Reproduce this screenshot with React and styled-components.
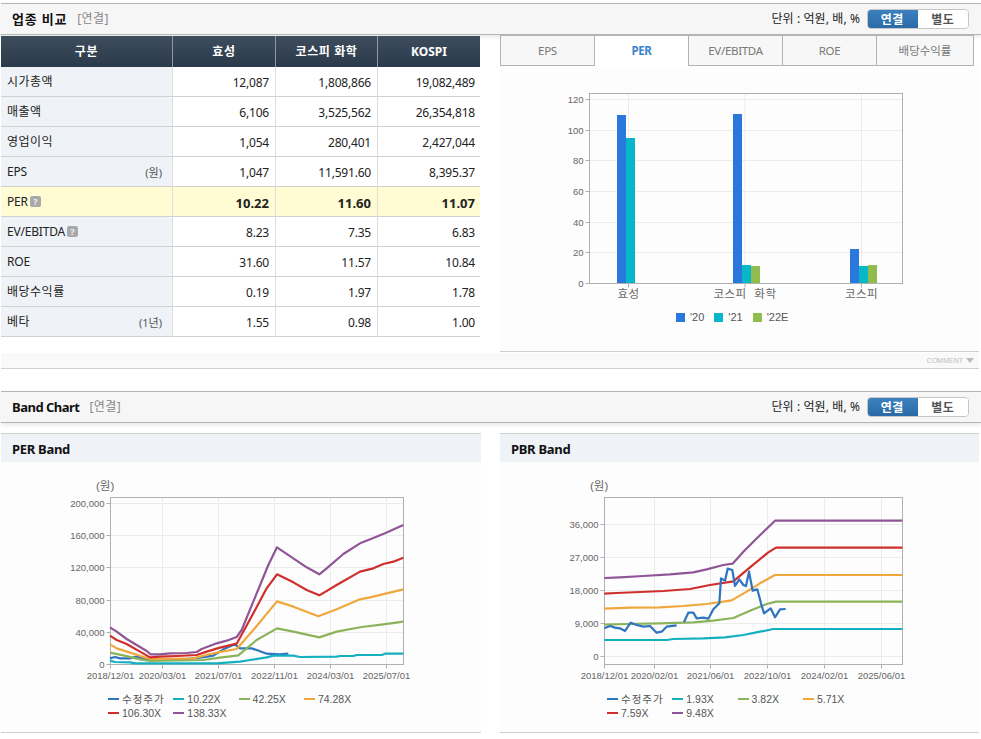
import React from 'react';
import styled, { createGlobalStyle } from 'styled-components';

const GlobalStyle = createGlobalStyle`
  html, body {
    margin: 0;
    background: #fff;
  }
  * {
    box-sizing: border-box;
  }
`;

const FONT = `"Noto Sans", "Noto Sans CJK KR", sans-serif`;
const CHART_FONT = `"Liberation Sans", "Noto Sans CJK KR", sans-serif`;

const isKo = (text) => /[가-힣]/.test(text);

const Page = styled.div`
  width: 981px;
  height: 739px;
  padding: 3px 0 0 1px;
  overflow: hidden;
  font-family: ${FONT};
  font-size: 12px;
  line-height: 14px;
  color: #222;
`;

const SectionBar = styled.div`
  display: flex;
  align-items: center;
  height: 32px;
  margin-top: ${(p) => p.$top || 0}px;
  padding: 0 12px 0 11px;
  background: #f6f6f6;
  border-top: 1px solid #b5b5b5;
  border-bottom: 1px solid #b5b5b5;
  box-shadow: 0 2px 4px rgba(0, 0, 0, 0.1);
`;

const SectionTitle = styled.h2`
  margin: 0;
  font-size: 13px;
  font-weight: 700;
  letter-spacing: ${(p) => (p.$ko ? '0.8px' : '-0.5px')};
  color: #111;
`;

const Scope = styled.span`
  margin-left: 10px;
  font-size: 12px;
  letter-spacing: 0.4px;
  color: #888;
`;

const Unit = styled.span`
  margin-left: auto;
  margin-right: 7px;
  font-size: 12px;
  letter-spacing: 0.1px;
`;

const Toggle = styled.div`
  display: flex;
  width: 102px;
  height: 20px;
  border-radius: 4px;
  overflow: hidden;
  border: 1px solid #c6c6c6;
`;

const ToggleButton = styled.button`
  flex: 1;
  margin: ${(p) => (p.$active ? '-1px 0 -1px -1px' : 0)};
  padding: 0;
  border: 0;
  font-family: inherit;
  font-size: 12px;
  font-weight: 700;
  letter-spacing: 0.5px;
  color: ${(p) => (p.$active ? '#fff' : '#555')};
  background: ${(p) => (p.$active ? 'linear-gradient(#3d82c0, #2a68a6)' : '#fff')};
`;

const Columns = styled.div`
  display: grid;
  grid-template-columns: 480px 479px;
  column-gap: 19px;
  margin-top: ${(p) => p.$top || 0}px;
`;

const CompareTable = styled.table`
  width: 479px;
  height: 301px;
  margin-top: 1px;
  table-layout: fixed;
  border-collapse: separate;
  border-spacing: 0;
`;

const HeadCell = styled.th`
  width: ${(p) => p.$width}px;
  height: 31px;
  padding: 0;
  font-size: 12px;
  font-weight: 700;
  letter-spacing: ${(p) => (p.$ko ? '0.6px' : 0)};
  color: #fff;
  background: linear-gradient(#3e4d5d, #2b3a4a);
  border-right: 1px solid #8d99a6;
  &:last-child {
    border-right: 0;
  }
`;

const LabelCell = styled.td`
  height: 30px;
  padding: 0 10px 0 6px;
  background: ${(p) => (p.$hot ? '#fffbd2' : '#eff2f7')};
  border-right: 1px solid #dedede;
  border-bottom: 1px solid #d0d0d0;
`;

const LabelInner = styled.div`
  display: flex;
  align-items: center;
  justify-content: space-between;
`;

const LabelText = styled.span`
  display: flex;
  align-items: center;
  gap: 2px;
  letter-spacing: ${(p) => (p.$ko ? '0.5px' : '-0.2px')};
`;

const Note = styled.span`
  margin-top: 3px;
  font-size: 11px;
  color: #555;
`;

const HelpBadge = styled.span`
  display: inline-block;
  width: 11px;
  height: 11px;
  border-radius: 2px;
  background: #a9a9a9;
  color: #eee;
  font-size: 9px;
  font-weight: 700;
  line-height: 11px;
  text-align: center;
  letter-spacing: 0;
`;

const ValueCell = styled.td`
  height: 30px;
  padding: 2px 6px 0 0;
  text-align: right;
  font-weight: ${(p) => (p.$hot ? 700 : 400)};
  font-size: ${(p) => (p.$hot ? '13px' : '12px')};
  letter-spacing: ${(p) => (p.$hot ? 0 : '-0.2px')};
  color: #222;
  background: ${(p) => (p.$hot ? '#fffbd2' : '#fff')};
  border-right: 1px solid #dedede;
  border-bottom: 1px solid #d0d0d0;
  &:last-child {
    padding-right: 5px;
    border-right: 0;
  }
`;

const Tabs = styled.div`
  display: flex;
  width: 474px;
  height: 31px;
`;

const Tab = styled.div`
  flex: 0 0 95px;
  display: flex;
  align-items: center;
  justify-content: center;
  margin-left: -1px;
  font-size: 11.5px;
  font-weight: ${(p) => (p.$active ? 700 : 400)};
  letter-spacing: ${(p) => (p.$ko ? 0 : '-0.3px')};
  color: ${(p) => (p.$active ? '#3a85cc' : '#777')};
  background: ${(p) => (p.$active ? '#fff' : '#f7f7f7')};
  border: 1px solid #b2b2b2;
  border-bottom: ${(p) => (p.$active ? '0' : '1px solid #b2b2b2')};
  &:first-child {
    margin-left: 0;
  }
  &:last-child {
    flex: 1;
  }
`;

const BarPanel = styled.div`
  height: 286px;
  background: #fdfdfd;
  border-bottom: 1px solid #cfcfcf;
`;

const ChartSvg = styled.svg`
  display: block;
  font-family: ${CHART_FONT};
  font-size: 9.5px;
  fill: #666;
`;

const CommentStrip = styled.div`
  display: flex;
  align-items: center;
  justify-content: flex-end;
  gap: 3px;
  width: 978px;
  height: 16px;
  margin-top: 1px;
  padding-right: 5px;
  background: #f9f9f9;
  border-bottom: 1px solid #cfcfcf;
  font-family: ${CHART_FONT};
  font-size: 7px;
  color: #bbb;
`;

const CommentArrow = styled.i`
  width: 0;
  height: 0;
  border-left: 4px solid transparent;
  border-right: 4px solid transparent;
  border-top: 5px solid #bbb;
`;

const BandPanel = styled.section`
  height: 300px;
  background: #fdfdfd;
  border-top: 1px solid #cfcfcf;
  border-bottom: 1px solid #cfcfcf;
`;

const BandTitle = styled.h3`
  display: flex;
  align-items: center;
  height: 28px;
  margin: 0;
  padding: 2px 0 0 11px;
  font-size: 13px;
  font-weight: 700;
  letter-spacing: -0.3px;
  color: #111;
  background: #eff2f7;
`;

const SquareLegend = styled.div`
  display: flex;
  gap: 10px;
  margin-top: 4px;
  padding-left: 176px;
  font-family: ${CHART_FONT};
  font-size: 11px;
  color: #555;
`;

const SquareItem = styled.span`
  display: flex;
  align-items: center;
  gap: 5px;
`;

const Square = styled.i`
  width: 9px;
  height: 9px;
  background: ${(p) => p.$color};
`;

const LineLegend = styled.div`
  display: grid;
  grid-template-columns: repeat(4, 65.3px);
  grid-auto-rows: 14px;
  padding-left: ${(p) => p.$left}px;
  font-family: ${CHART_FONT};
  font-size: 10.5px;
  color: #555;
`;

const LineItem = styled.span`
  display: flex;
  align-items: center;
  gap: 3px;
  letter-spacing: ${(p) => (p.$ko ? '1px' : 0)};
  white-space: nowrap;
`;

const Swatch = styled.i`
  flex: none;
  width: 11px;
  height: 2.5px;
  background: ${(p) => p.$color};
`;

const COLORS = {
  blue: '#2f74c0',
  teal: '#14b0c0',
  green: '#8bb35a',
  orange: '#f0a83c',
  red: '#cf2f2c',
  purple: '#8f5596',
};

const ROWS = [
  { label: '시가총액', values: ['12,087', '1,808,866', '19,082,489'] },
  { label: '매출액', values: ['6,106', '3,525,562', '26,354,818'] },
  { label: '영업이익', values: ['1,054', '280,401', '2,427,044'] },
  { label: 'EPS', note: '(원)', values: ['1,047', '11,591.60', '8,395.37'] },
  { label: 'PER', help: true, hot: true, values: ['10.22', '11.60', '11.07'] },
  { label: 'EV/EBITDA', help: true, values: ['8.23', '7.35', '6.83'] },
  { label: 'ROE', values: ['31.60', '11.57', '10.84'] },
  { label: '배당수익률', values: ['0.19', '1.97', '1.78'] },
  { label: '베타', note: '(1년)', values: ['1.55', '0.98', '1.00'] },
];

const TABS = ['EPS', 'PER', 'EV/EBITDA', 'ROE', '배당수익률'];

const HEADS = [['구분', 172], ['효성', 103], ['코스피 화학', 102], ['KOSPI', 102]];

// zoomed-crop coordinates (3x), converted to page coordinates when drawn
const PER_LINES = [
  ['blue', [[150,505],[165,501],[180,505],[210,505],[230,500],[260,507],[300,510],[340,510],[380,507],[420,503],[460,497],[490,478],[525,463],[540,475],[575,475],[590,480],[620,491],[660,493],[685,491]]],
  ['teal', [[150,512],[165,516],[210,517],[225,520],[470,520],[540,515],[570,510],[620,502],[640,497],[700,497],[720,501],[830,500],[840,498],[880,498],[890,495],[965,495],[975,491],[1030,491]]],
  ['green', [[150,488],[190,496],[240,508],[270,513],[430,510],[480,503],[535,496],[590,450],[651,415],[700,425],[778,442],[830,425],[905,411],[970,403],[1030,395]]],
  ['orange', [[150,463],[170,475],[210,488],[270,507],[300,507],[400,505],[450,492],[490,484],[530,477],[580,420],[651,334],[700,350],[775,379],[830,358],[900,328],[930,322],[980,310],[1030,298]]],
  ['red', [[150,437],[170,450],[200,462],[240,485],[270,502],[300,500],[350,498],[410,495],[440,485],[480,473],[530,461],[580,370],[620,295],[651,253],[700,277],[740,300],[778,316],[830,285],[900,245],[940,235],[970,222],[1000,215],[1030,203]]],
  ['purple', [[150,412],[170,425],[200,447],[230,465],[260,483],[272,493],[300,493],[330,490],[380,489],[410,486],[425,477],[470,460],[500,452],[530,441],[545,420],[590,310],[625,225],[651,172],[700,205],[740,232],[778,253],[800,235],[850,192],[900,160],[925,150],[975,130],[1030,105]]],
];

const PBR_LINES = [
  ['teal', [[133,450],[320,450],[340,447],[430,445],[495,442],[550,435],[600,425],[640,417],[1027,417]]],
  ['green', [[133,404],[200,402],[300,400],[400,397],[460,392],[520,384],[570,362],[620,342],[648,335],[1027,335]]],
  ['orange', [[133,356],[210,353],[300,352],[370,348],[440,342],[515,331],[560,305],[600,280],[645,255],[1027,255]]],
  ['red', [[133,311],[170,309],[240,306],[310,303],[390,297],[450,285],[520,274],[570,232],[625,187],[648,173],[1027,173]]],
  ['purple', [[133,264],[180,262],[250,258],[330,253],[400,247],[440,238],[490,225],[518,221],[550,185],[580,155],[645,92],[1027,92]]],
  ['blue', [[133,415],[150,408],[165,413],[180,415],[195,423],[212,398],[230,405],[250,410],[270,408],[290,428],[305,425],[320,410],[350,406]]],
  ['blue', [[372,396],[385,368],[400,368],[410,385],[430,383],[445,386],[460,358],[478,340],[483,265],[495,272],[503,236],[517,240],[525,288],[538,268],[550,285],[558,288],[567,245],[578,302],[592,298],[603,340],[612,370],[632,355],[645,382],[660,358],[677,357]]],
];

const toPoints = (pts, ox, oy) => pts.map(([x, y]) => `${ox + x / 3},${oy + y / 3}`).join(' ');

function BarChart() {
  const left = 589.5;
  const right = 902.5;
  const top = 93.5;
  const bottom = 283.5;
  const ticks = [['120', 99.5], ['100', 130.5], ['80', 160.5], ['60', 191.5], ['40', 222.5], ['20', 252.5], ['0', 283.5]];
  const cats = [['효성', 628.5], ['코스피 화학', 745], ['코스피', 861.5]];
  const bars = [
    [617, 115, '#2b78dc'], [626, 138, '#06b6c9'],
    [733, 114, '#2b78dc'], [742, 265, '#06b6c9'], [751, 266, '#8fbc4c'],
    [850, 249, '#2b78dc'], [859, 266, '#06b6c9'], [868, 265, '#8fbc4c'],
  ];
  return (
    <ChartSvg width="479" height="240" viewBox="500 66 479 240">
      {ticks.map(([label, y]) => (
        <g key={label}>
          <line x1={left} x2={right} y1={y} y2={y} stroke="#ececec" />
          <line x1={left - 4} x2={left} y1={y} y2={y} stroke="#b0b0b0" />
          <text x={left - 6} y={y + 3.5} textAnchor="end">{label}</text>
        </g>
      ))}
      {cats.map(([label, x]) => (
        <line key={label} x1={x} x2={x} y1={top} y2={bottom} stroke="#ececec" />
      ))}
      {bars.map(([x, y, color]) => (
        <rect key={x} x={x} y={y} width="9" height={283 - y} fill={color} />
      ))}
      <rect x={left} y={top} width={right - left} height={bottom - top} fill="none" stroke="#b0b0b0" />
      {cats.map(([label, x]) => (
        <g key={label}>
          <line x1={x} x2={x} y1={bottom} y2={bottom + 4} stroke="#b0b0b0" />
          <text x={x} y={298} textAnchor="middle" fontSize="11.5" letterSpacing="0.5" wordSpacing="4">{label}</text>
        </g>
      ))}
    </ChartSvg>
  );
}

function BandChart({ box, plot, oy, ox, yTicks, xTicks, lines, unitX }) {
  const [left, right, top, bottom] = plot;
  return (
    <ChartSvg width={box[2]} height={box[3]} viewBox={box.join(' ')}>
      <text x={unitX} y={490} fontSize="11.5">(원)</text>
      {yTicks.map(([label, y]) => (
        <g key={label}>
          <line x1={left} x2={right} y1={y} y2={y} stroke="#ececec" />
          <line x1={left - 4} x2={left} y1={y} y2={y} stroke="#b0b0b0" />
          <text x={left - 6} y={y + 3.5} textAnchor="end">{label}</text>
        </g>
      ))}
      {xTicks.map(([label, x]) => (
        <line key={label} x1={x} x2={x} y1={top} y2={bottom} stroke="#ececec" />
      ))}
      <rect x={left} y={top} width={right - left} height={bottom - top} fill="none" stroke="#b0b0b0" />
      {lines.map(([name, pts], i) => (
        <polyline
          key={i}
          points={toPoints(pts, ox, oy)}
          fill="none"
          stroke={COLORS[name]}
          strokeWidth="2.2"
          strokeLinejoin="round"
        />
      ))}
      {xTicks.map(([label, x]) => (
        <g key={label}>
          <line x1={x} x2={x} y1={bottom} y2={bottom + 4} stroke="#b0b0b0" />
          <text x={x} y={679} textAnchor="middle">{label}</text>
        </g>
      ))}
    </ChartSvg>
  );
}

function Legend({ left, items }) {
  return (
    <LineLegend $left={left}>
      {items.map(([name, label]) => (
        <LineItem key={label} $ko={isKo(label)}>
          <Swatch $color={COLORS[name]} />
          {label}
        </LineItem>
      ))}
    </LineLegend>
  );
}

function Header({ title, top }) {
  return (
    <SectionBar $top={top}>
      <SectionTitle $ko={isKo(title)}>{title}</SectionTitle>
      <Scope>[연결]</Scope>
      <Unit>단위 : 억원, 배, %</Unit>
      <Toggle>
        <ToggleButton $active>연결</ToggleButton>
        <ToggleButton>별도</ToggleButton>
      </Toggle>
    </SectionBar>
  );
}

export default function App() {
  return (
    <Page>
      <GlobalStyle />
      <Header title="업종 비교" />
      <Columns>
        <CompareTable>
          <thead>
            <tr>
              {HEADS.map(([label, width]) => (
                <HeadCell key={label} $width={width} $ko={isKo(label)}>{label}</HeadCell>
              ))}
            </tr>
          </thead>
          <tbody>
            {ROWS.map((row) => (
              <tr key={row.label}>
                <LabelCell $hot={row.hot}>
                  <LabelInner>
                    <LabelText $ko={isKo(row.label)}>
                      {row.label}
                      {row.help && <HelpBadge>?</HelpBadge>}
                    </LabelText>
                    {row.note && <Note>{row.note}</Note>}
                  </LabelInner>
                </LabelCell>
                {row.values.map((value, i) => (
                  <ValueCell key={i} $hot={row.hot}>{value}</ValueCell>
                ))}
              </tr>
            ))}
          </tbody>
        </CompareTable>
        <div>
          <Tabs>
            {TABS.map((tab) => (
              <Tab key={tab} $active={tab === 'PER'} $ko={isKo(tab)}>{tab}</Tab>
            ))}
          </Tabs>
          <BarPanel>
            <BarChart />
            <SquareLegend>
              <SquareItem><Square $color="#2b78dc" />'20</SquareItem>
              <SquareItem><Square $color="#06b6c9" />'21</SquareItem>
              <SquareItem><Square $color="#8fbc4c" />'22E</SquareItem>
            </SquareLegend>
          </BarPanel>
        </div>
      </Columns>
      <CommentStrip>
        COMMENT
        <CommentArrow />
      </CommentStrip>
      <Header title="Band Chart" top={22} />
      <Columns $top={10}>
        <BandPanel>
          <BandTitle>PER Band</BandTitle>
          <BandChart
            box={[1, 462, 480, 230]}
            plot={[110.5, 403.5, 497.5, 664.5]}
            ox={60}
            oy={490}
            unitX={96}
            yTicks={[['200,000', 503.5], ['160,000', 535.5], ['120,000', 567.5], ['80,000', 600.5], ['40,000', 632.5], ['0', 664.5]]}
            xTicks={[['2018/12/01', 110.5], ['2020/03/01', 162.5], ['2021/07/01', 218.5], ['2022/11/01', 274.5], ['2024/03/01', 330.5], ['2025/07/01', 386.5]]}
            lines={PER_LINES}
          />
          <Legend
            left={107}
            items={[['blue', '수정주가'], ['teal', '10.22X'], ['green', '42.25X'], ['orange', '74.28X'], ['red', '106.30X'], ['purple', '138.33X']]}
          />
        </BandPanel>
        <BandPanel>
          <BandTitle>PBR Band</BandTitle>
          <BandChart
            box={[500, 462, 479, 230]}
            plot={[604.5, 902.5, 497.5, 664.5]}
            ox={560}
            oy={490}
            unitX={590}
            yTicks={[['36,000', 524.5], ['27,000', 557.5], ['18,000', 590.5], ['9,000', 623.5], ['0', 656.5]]}
            xTicks={[['2018/12/01', 604.5], ['2020/02/01', 654.5], ['2021/06/01', 710.5], ['2022/10/01', 767.5], ['2024/02/01', 824.5], ['2025/06/01', 881.5]]}
            lines={PBR_LINES}
          />
          <Legend
            left={107}
            items={[['blue', '수정주가'], ['teal', '1.93X'], ['green', '3.82X'], ['orange', '5.71X'], ['red', '7.59X'], ['purple', '9.48X']]}
          />
        </BandPanel>
      </Columns>
    </Page>
  );
}
